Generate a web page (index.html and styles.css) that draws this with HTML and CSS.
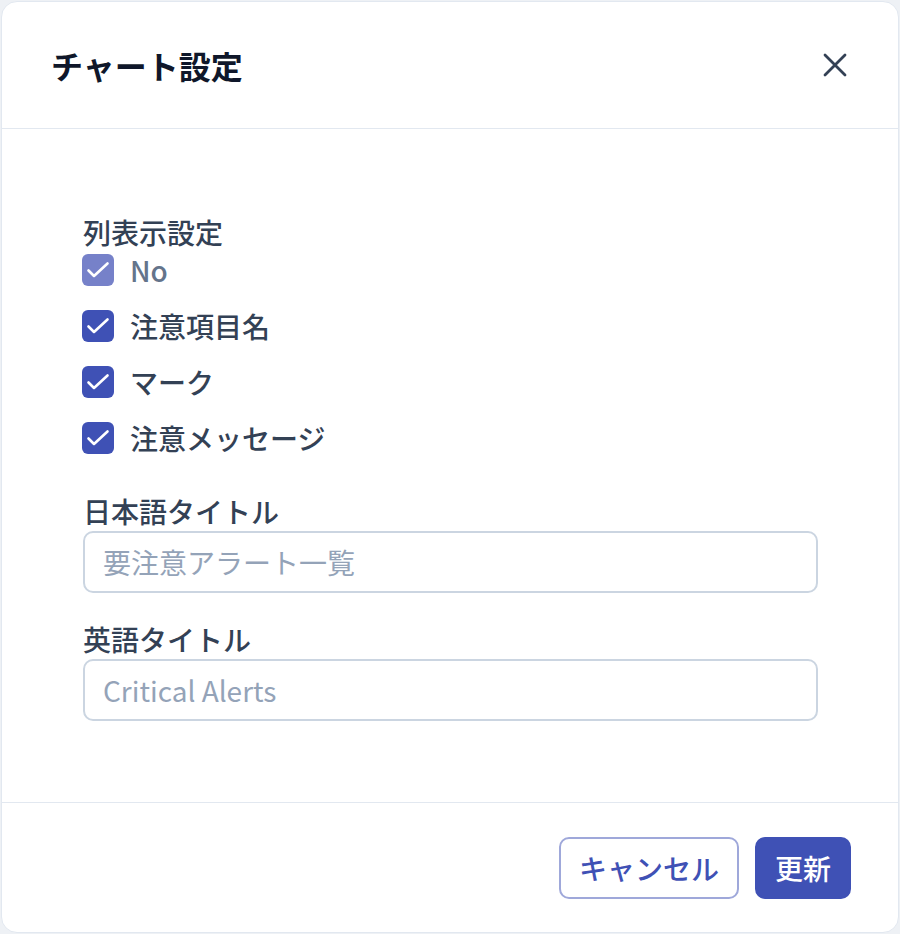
FILE: index.html
```html
<!DOCTYPE html>
<html lang="ja">
<head>
<meta charset="utf-8">
<title>チャート設定</title>
<link rel="stylesheet" href="styles.css">
</head>
<body>
<div class="dialog">
  <header class="dialog-header">
    <h1 class="dialog-title">チャート設定</h1>
    <button class="close-btn" aria-label="閉じる">
      <svg width="24" height="24" viewBox="0 0 24 24"><path d="M2 2L22 22M22 2L2 22" stroke="#334155" stroke-width="2.8" stroke-linecap="round" fill="none"/></svg>
    </button>
  </header>
  <main class="dialog-body">
    <div class="field-label">列表示設定</div>
    <div class="check-list">
      <label class="check-row disabled">
        <span class="checkbox"><svg width="32" height="32" viewBox="0 0 32 32"><path d="M6.5 16.5L12 22L25.5 9.5" stroke="#fff" stroke-width="2.6" stroke-linecap="round" stroke-linejoin="round" fill="none"/></svg></span>
        <span class="check-text">No</span>
      </label>
      <label class="check-row">
        <span class="checkbox"><svg width="32" height="32" viewBox="0 0 32 32"><path d="M6.5 16.5L12 22L25.5 9.5" stroke="#fff" stroke-width="2.6" stroke-linecap="round" stroke-linejoin="round" fill="none"/></svg></span>
        <span class="check-text">注意項目名</span>
      </label>
      <label class="check-row">
        <span class="checkbox"><svg width="32" height="32" viewBox="0 0 32 32"><path d="M6.5 16.5L12 22L25.5 9.5" stroke="#fff" stroke-width="2.6" stroke-linecap="round" stroke-linejoin="round" fill="none"/></svg></span>
        <span class="check-text">マーク</span>
      </label>
      <label class="check-row">
        <span class="checkbox"><svg width="32" height="32" viewBox="0 0 32 32"><path d="M6.5 16.5L12 22L25.5 9.5" stroke="#fff" stroke-width="2.6" stroke-linecap="round" stroke-linejoin="round" fill="none"/></svg></span>
        <span class="check-text">注意メッセージ</span>
      </label>
    </div>
    <div class="text-field first">
      <div class="input-label">日本語タイトル</div>
      <input class="text-input" type="text" placeholder="要注意アラート一覧">
    </div>
    <div class="text-field second">
      <div class="input-label">英語タイトル</div>
      <input class="text-input" type="text" placeholder="Critical Alerts">
    </div>
  </main>
  <footer class="dialog-footer">
    <button class="btn btn-outline">キャンセル</button>
    <button class="btn btn-primary">更新</button>
  </footer>
</div>
</body>
</html>
```
FILE: styles.css
```css
* { box-sizing: border-box; }
html, body { margin: 0; padding: 0; }
body {
  background: #eef1f5;
  font-family: "Noto Sans CJK JP", "Noto Sans", sans-serif;
  width: 900px;
  height: 934px;
  overflow: hidden;
}
.dialog {
  margin: 1px;
  height: 932px;
  background: #fff;
  border: 1px solid #e2e8f0;
  border-radius: 16px;
  display: flex;
  flex-direction: column;
  overflow: hidden;
}
.dialog-header {
  height: 127px;
  flex: none;
  display: flex;
  align-items: center;
  justify-content: space-between;
  padding: 0 51px 0 49px;
  border-bottom: 1px solid #e2e8f0;
}
.dialog-title {
  margin: 0;
  font-size: 32px;
  line-height: 48px;
  font-weight: 700;
  color: #0f172a;
}
.close-btn {
  border: 0;
  background: none;
  padding: 0;
  width: 24px;
  height: 24px;
  display: flex;
  cursor: pointer;
}
.dialog-body {
  flex: 1;
  padding: 82px 80px 0 81px;
  display: flex;
  flex-direction: column;
}
.field-label {
  font-size: 28px;
  line-height: 42px;
  font-weight: 500;
  color: #334155;
}
.check-list {
  display: flex;
  flex-direction: column;
  gap: 24px;
  margin-top: 1px;
}
.check-row {
  display: flex;
  align-items: center;
  gap: 16px;
  height: 32px;
}
.checkbox {
  width: 32px;
  height: 32px;
  border-radius: 6px;
  background: #3f51b5;
  display: flex;
  margin-left: -1px;
}
.check-text {
  font-size: 28px;
  line-height: 32px;
  font-weight: 500;
  color: #334155;
}
.check-row.disabled .checkbox { background: #7681c9; }
.check-row.disabled .check-text { color: #64748b; }
.text-field { display: flex; flex-direction: column; }
.text-field.first { margin-top: 37px; }
.text-field.second { margin-top: 26px; }
.input-label {
  font-size: 28px;
  line-height: 40px;
  font-weight: 500;
  color: #334155;
}
.text-input {
  height: 62px;
  width: 100%;
  border: 2px solid #cbd5e1;
  border-radius: 10px;
  padding: 0 18px;
  font-family: "Noto Sans CJK JP", "Noto Sans", sans-serif;
  font-size: 28px;
  color: #334155;
  background: #fff;
  outline: none;
}
.text-input::placeholder { color: #94a3b8; opacity: 1; }
.dialog-footer {
  flex: none;
  height: 130px;
  border-top: 1px solid #e2e8f0;
  display: flex;
  justify-content: flex-end;
  align-items: flex-start;
  gap: 16px;
  padding: 34px 47px 0 0;
}
.btn {
  height: 62px;
  border-radius: 10px;
  padding: 0 18px;
  font-family: "Noto Sans CJK JP", "Noto Sans", sans-serif;
  font-size: 28px;
  font-weight: 500;
  cursor: pointer;
}
.btn-outline {
  background: #fff;
  border: 2px solid #9fa8da;
  color: #3f51b5;
}
.btn-primary {
  background: #3f51b5;
  border: 2px solid #3f51b5;
  color: #fff;
}
```
